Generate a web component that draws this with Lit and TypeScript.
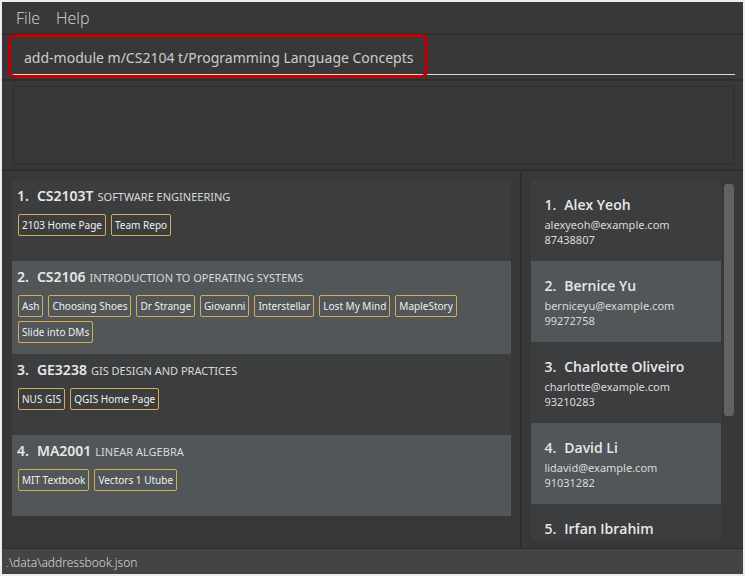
import { LitElement, html, css } from "lit";
import { customElement, property } from "lit/decorators.js";

interface Module {
  code: string;
  title: string;
  links: string[];
}

interface Person {
  name: string;
  details: string[];
}

const MODULES: Module[] = [
  { code: "CS2103T", title: "SOFTWARE ENGINEERING", links: ["2103 Home Page", "Team Repo"] },
  {
    code: "CS2106",
    title: "INTRODUCTION TO OPERATING SYSTEMS",
    links: ["Ash", "Choosing Shoes", "Dr Strange", "Giovanni", "Interstellar", "Lost My Mind", "MapleStory", "Slide into DMs"],
  },
  { code: "GE3238", title: "GIS DESIGN AND PRACTICES", links: ["NUS GIS", "QGIS Home Page"] },
  { code: "MA2001", title: "LINEAR ALGEBRA", links: ["MIT Textbook", "Vectors 1 Utube"] },
];

const PERSONS: Person[] = [
  { name: "Alex Yeoh", details: ["alexyeoh@example.com", "87438807"] },
  { name: "Bernice Yu", details: ["berniceyu@example.com", "99272758"] },
  { name: "Charlotte Oliveiro", details: ["charlotte@example.com", "93210283"] },
  { name: "David Li", details: ["lidavid@example.com", "91031282"] },
  { name: "Irfan Ibrahim", details: [] },
];

@customElement("module-card")
class ModuleCard extends LitElement {
  @property({ type: Number }) index = 1;
  @property({ attribute: false }) module!: Module;

  static styles = css`
    :host {
      display: block;
    }
    .heading {
      display: flex;
      align-items: baseline;
      margin: 0;
      font-size: 14px;
      line-height: 20px;
      font-weight: 600;
      color: #e8e8e8;
      white-space: nowrap;
    }
    .number {
      margin-right: 8px;
    }
    .title {
      margin-left: 4px;
      font-size: 11px;
      font-weight: 400;
      color: #dadada;
    }
    .links {
      display: flex;
      flex-wrap: wrap;
      gap: 4px 5px;
      margin: 7px 0 0 1px;
      padding: 0;
      list-style: none;
    }
    .link {
      display: block;
      box-sizing: border-box;
      height: 22px;
      padding: 0 3px;
      border: 1px solid #d6ab58;
      border-radius: 2px;
      font-size: 10px;
      line-height: 20px;
      color: #f0f0f0;
      text-decoration: none;
      white-space: nowrap;
    }
  `;

  render() {
    return html`
      <h2 class="heading">
        <span class="number">${this.index}.</span>
        <span>${this.module.code}</span>
        <span class="title">${this.module.title}</span>
      </h2>
      <ul class="links">
        ${this.module.links.map((name) => html`<li><a class="link" href="#">${name}</a></li>`)}
      </ul>
    `;
  }
}

@customElement("person-card")
class PersonCard extends LitElement {
  @property({ type: Number }) index = 1;
  @property({ attribute: false }) person!: Person;

  static styles = css`
    :host {
      display: block;
    }
    .name {
      display: flex;
      gap: 8px;
      margin: 0 0 2px;
      font-family: "Open Sans", "Noto Sans", sans-serif;
      font-size: 14px;
      line-height: 20px;
      font-weight: 600;
      color: #e8e8e8;
      white-space: nowrap;
    }
    .detail {
      margin: 0;
      font-size: 11px;
      line-height: 15px;
      color: #dadada;
    }
  `;

  render() {
    const { name, details } = this.person;
    return html`
      <h2 class="name"><span>${this.index}.</span><span>${name}</span></h2>
      ${details.map((text) => html`<p class="detail">${text}</p>`)}
    `;
  }
}

@customElement("app-root")
class AppRoot extends LitElement {
  static styles = css`
    :host {
      display: flex;
      flex-direction: column;
      box-sizing: border-box;
      height: 100vh;
      padding: 2px;
      background: #eceef2;
      font-family: "Noto Sans", "Open Sans", sans-serif;
      color: #dadada;
    }
    .window {
      flex: 1;
      min-height: 0;
      display: flex;
      flex-direction: column;
      background: #383838;
    }
    .menu {
      display: flex;
      gap: 16px;
      padding: 4px 14px 3px;
      border-bottom: 2px solid #2f2f2f;
    }
    .menu-item {
      padding: 0;
      border: 0;
      background: none;
      font: 300 16px/24px "Open Sans", "Noto Sans", sans-serif;
      color: #dadada;
    }
    .command {
      position: relative;
      padding: 5px 8px 4px 10px;
      border-bottom: 2px solid #2d2d2d;
    }
    .command-input {
      display: block;
      box-sizing: border-box;
      width: 100%;
      height: 35px;
      padding: 0 12px;
      border: 0;
      border-bottom: 1px solid #dcdcdc;
      outline: 0;
      background: none;
      font: 400 14px/24px "Noto Sans", "Open Sans", sans-serif;
      color: #cccccc;
    }
    .highlight {
      position: absolute;
      top: -1px;
      left: 6px;
      box-sizing: border-box;
      width: 420px;
      height: 44px;
      border: 3px solid #c00000;
      border-radius: 7px;
      pointer-events: none;
    }
    .result {
      padding: 4px 8px 4px 10px;
      border-bottom: 2px solid #2d2d2d;
    }
    .result-box {
      display: block;
      box-sizing: border-box;
      width: 100%;
      height: 80px;
      padding: 8px;
      border: 2px solid #323232;
      outline: 0;
      resize: none;
      background: none;
      font: 400 14px/20px "Noto Sans", "Open Sans", sans-serif;
      color: #cccccc;
    }
    .panes {
      flex: 1;
      min-height: 0;
      display: grid;
      grid-template-columns: minmax(0, 47fr) 2px minmax(0, 20fr);
      grid-template-rows: minmax(0, 1fr);
    }
    .divider {
      background: #2d2d2d;
    }
    .modules {
      padding: 9px 9px 9px 10px;
      overflow: hidden;
    }
    .persons {
      display: flex;
      gap: 3px;
      padding: 9px;
    }
    .list {
      margin: 0;
      padding: 0;
      list-style: none;
      overflow: hidden;
    }
    .person-list {
      flex: 1;
      min-width: 0;
    }
    .row {
      box-sizing: border-box;
      min-height: 81px;
      background: #3c3d3f;
    }
    .row:nth-child(even) {
      background: #515658;
    }
    .module-row {
      padding: 6px 5px 11px;
    }
    .person-row {
      padding: 15px 13px 12px;
    }
    .track {
      width: 10px;
      padding: 4px 0;
    }
    .thumb {
      height: 66%;
      border-radius: 3px;
      background: #626262;
    }
    .status {
      padding: 4px 4px 1px;
      border-top: 1px solid #2d2d2d;
      background: #444444;
      font-size: 12px;
      line-height: 20px;
      font-weight: 300;
    }
  `;

  render() {
    return html`
      <div class="window">
        <nav class="menu">
          <button class="menu-item">File</button>
          <button class="menu-item">Help</button>
        </nav>
        <div class="command">
          <input
            class="command-input"
            aria-label="Command"
            spellcheck="false"
            value="add-module m/CS2104 t/Programming Language Concepts"
          />
          <div class="highlight"></div>
        </div>
        <div class="result">
          <textarea class="result-box" aria-label="Result" readonly></textarea>
        </div>
        <main class="panes">
          <section class="modules">
            <ol class="list">
              ${MODULES.map(
                (m, i) => html`<li class="row module-row"><module-card .index=${i + 1} .module=${m}></module-card></li>`
              )}
            </ol>
          </section>
          <div class="divider"></div>
          <section class="persons">
            <ol class="list person-list">
              ${PERSONS.map(
                (p, i) => html`<li class="row person-row"><person-card .index=${i + 1} .person=${p}></person-card></li>`
              )}
            </ol>
            <div class="track"><div class="thumb"></div></div>
          </section>
        </main>
        <footer class="status">.\\data\\addressbook.json</footer>
      </div>
    `;
  }
}
